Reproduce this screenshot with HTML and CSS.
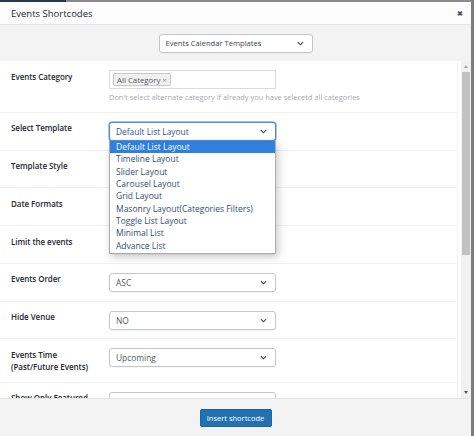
FILE: index.html
```html
<!DOCTYPE html>
<html>
<head>
<meta charset="utf-8">
<link rel="stylesheet" href="styles.css">
</head>
<body>
<div class="screen">
  <div class="modal">
    <div class="topbar"><span class="topbar-accent"></span></div>
    <div class="modal-header">
      <span class="modal-title">Events Shortcodes</span>
      <span class="close">&#x2716;</span>
    </div>
    <div class="toolbar">
      <div class="select select-wide">
        <span class="select-text">Events Calendar Templates</span>
        <svg class="chev" viewBox="0 0 8 5" width="7" height="5"><polyline points="1,1 4,4 7,1" fill="none" stroke="#3c434a" stroke-width="1.2"/></svg>
      </div>
    </div>
    <div class="content">
      <div class="form">
        <div class="row row-category">
          <div class="label">Events Category</div>
          <div class="field">
            <div class="tagbox"><span class="tag">All Category <span class="tag-x">&#xd7;</span></span></div>
            <div class="help">Don't select alternate category if already you have selecetd all categories</div>
          </div>
        </div>
        <div class="row">
          <div class="label">Select Template</div>
          <div class="field field-dd">
            <div class="select select-focus">
              <span class="select-text">Default List Layout</span>
              <svg class="chev" viewBox="0 0 8 5" width="7" height="5"><polyline points="1,1 4,4 7,1" fill="none" stroke="#3c434a" stroke-width="1.2"/></svg>
            </div>
            <ul class="dropdown">
              <li class="opt opt-active">Default List Layout</li>
              <li class="opt">Timeline Layout</li>
              <li class="opt">Slider Layout</li>
              <li class="opt">Carousel Layout</li>
              <li class="opt">Grid Layout</li>
              <li class="opt">Masonry Layout(Categories Filters)</li>
              <li class="opt">Toggle List Layout</li>
              <li class="opt">Minimal List</li>
              <li class="opt">Advance List</li>
            </ul>
          </div>
        </div>
        <div class="row">
          <div class="label">Template Style</div>
          <div class="field"><div class="select"></div></div>
        </div>
        <div class="row">
          <div class="label">Date Formats</div>
          <div class="field"><div class="select"></div></div>
        </div>
        <div class="row">
          <div class="label">Limit the events</div>
          <div class="field"><div class="select"></div></div>
        </div>
        <div class="row">
          <div class="label">Events Order</div>
          <div class="field">
            <div class="select">
              <span class="select-text">ASC</span>
              <svg class="chev" viewBox="0 0 8 5" width="7" height="5"><polyline points="1,1 4,4 7,1" fill="none" stroke="#3c434a" stroke-width="1.2"/></svg>
            </div>
          </div>
        </div>
        <div class="row">
          <div class="label">Hide Venue</div>
          <div class="field">
            <div class="select">
              <span class="select-text">NO</span>
              <svg class="chev" viewBox="0 0 8 5" width="7" height="5"><polyline points="1,1 4,4 7,1" fill="none" stroke="#3c434a" stroke-width="1.2"/></svg>
            </div>
          </div>
        </div>
        <div class="row">
          <div class="label">Events Time<br>(Past/Future Events)</div>
          <div class="field">
            <div class="select">
              <span class="select-text">Upcoming</span>
              <svg class="chev" viewBox="0 0 8 5" width="7" height="5"><polyline points="1,1 4,4 7,1" fill="none" stroke="#3c434a" stroke-width="1.2"/></svg>
            </div>
          </div>
        </div>
        <div class="row">
          <div class="label">Show Only Featured</div>
          <div class="field">
            <div class="select">
              <span class="select-text">NO</span>
              <svg class="chev" viewBox="0 0 8 5" width="7" height="5"><polyline points="1,1 4,4 7,1" fill="none" stroke="#3c434a" stroke-width="1.2"/></svg>
            </div>
          </div>
        </div>
      </div>
      <div class="scrollbar">
        <span class="sb-arrow sb-up"></span>
        <div class="sb-track"><div class="sb-thumb"></div></div>
        <span class="sb-arrow sb-down"></span>
      </div>
    </div>
    <div class="footer">
      <button class="btn">Insert shortcode</button>
    </div>
  </div>
  <div class="edge"></div>
</div>
</body>
</html>
```
FILE: styles.css
```css
* { box-sizing: border-box; }
html, body { margin: 0; padding: 0; }
body {
  font-family: "Open Sans", "Noto Sans", "Liberation Sans", sans-serif;
  background: #fff;
  color: #23282d;
}
.screen {
  display: flex;
  width: 474px;
  height: 436px;
  overflow: hidden;
}
.modal {
  width: 471px;
  height: 436px;
  display: flex;
  flex-direction: column;
  background: #fff;
}
.edge {
  flex: 1;
  background: #7d7d7d;
}
.topbar {
  height: 2px;
  background: #8a8a8a;
  display: flex;
}
.topbar-accent {
  width: 66px;
  background: #23374d;
}
.modal-header {
  height: 23px;
  background: #fcfcfc;
  border-bottom: 1px solid #e2e4e7;
  display: flex;
  align-items: center;
  justify-content: space-between;
  padding: 0 8px 0 11px;
}
.modal-title {
  font-size: 9.5px;
  color: #23282d;
}
.close {
  font-size: 7px;
  color: #50575e;
  font-weight: bold;
}
.toolbar {
  height: 36px;
  background: #f3f3f3;
  display: flex;
  align-items: center;
  justify-content: center;
}
.select {
  height: 19px;
  border: 1px solid #c3c6ca;
  border-radius: 3px;
  background: #fff;
  display: flex;
  align-items: center;
  justify-content: space-between;
  padding: 0 8px 0 6px;
  box-shadow: 0 1px 1px rgba(0,0,0,0.04);
}
.select-wide {
  width: 154px;
  padding-left: 6px;
}
.select-text {
  font-size: 7.6px;
  color: #50575e;
}
.select-wide .select-text { color: #3c434a; }
.select-focus {
  border-color: #4f8fd0;
  box-shadow: 0 0 0 0.5px #4f8fd0;
}
.select-focus .select-text {
  color: #2e5581;
  font-size: 8.4px;
}
.select:not(.select-wide) .select-text { font-size: 8.4px; }
.chev { display: block; }
.content {
  height: 337px;
  display: flex;
  overflow: hidden;
}
.form {
  flex: 1;
  overflow: hidden;
  border-right: 1px solid #f2f2f2;
  margin-right: 3px;
}
.row {
  display: flex;
  padding: 9px 0 8.75px 11px;
  border-bottom: 1px solid #f0f0f1;
}
.label {
  width: 98px;
  flex: none;
  font-size: 8px;
  font-weight: 600;
  line-height: 12px;
  padding-top: 0.5px;
  letter-spacing: -0.05px;
  color: #23282d;
}
.field {
  width: 167px;
  flex: none;
}
.field-dd { position: relative; }
.tagbox {
  height: 19px;
  border: 1px solid #dcdcde;
  background: #fff;
  display: flex;
  align-items: center;
  padding-left: 3px;
}
.tag {
  height: 13px;
  display: inline-flex;
  align-items: center;
  padding: 0 3px;
  background: #f0f0f1;
  border: 1px solid #c8c8c8;
  border-radius: 2px;
  font-size: 7.8px;
  color: #50575e;
}
.tag-x {
  margin-left: 2px;
  color: #8c8f94;
  font-size: 8px;
}
.help {
  margin-top: 3px;
  line-height: 11px;
  font-size: 7.45px;
  color: #a7aaad;
  white-space: nowrap;
}
.dropdown {
  position: absolute;
  left: 0;
  top: 19px;
  width: 167px;
  margin: 0;
  padding: 0 0 1px;
  list-style: none;
  background: #fff;
  border: 1px solid #a8abb0;
  border-top: none;
  box-shadow: 2px 3px 8px rgba(0,0,0,0.22);
  z-index: 5;
}
.opt {
  height: 12.4px;
  line-height: 12.4px;
  padding-left: 6px;
  font-size: 8.5px;
  color: #34506f;
  white-space: nowrap;
}
.opt-active {
  background: #2e7fe0;
  color: #fff;
}
.scrollbar {
  width: 10px;
  flex: none;
  background: #f1f1f1;
  display: flex;
  flex-direction: column;
  align-items: center;
}
.sb-arrow {
  width: 0;
  height: 0;
  border-left: 2.5px solid transparent;
  border-right: 2.5px solid transparent;
  margin: 4px 0;
}
.sb-up { border-bottom: 3px solid #a3a3a3; }
.sb-down { border-top: 3px solid #505050; }
.sb-track {
  flex: 1;
  width: 100%;
  display: flex;
  justify-content: center;
}
.sb-thumb {
  width: 8px;
  height: 183px;
  background: #c1c1c1;
}
.footer {
  flex: 1;
  background: #f3f3f3;
  border-top: 1px solid #e5e5e5;
  display: flex;
  align-items: center;
  justify-content: center;
}
.btn {
  height: 18px;
  width: 72px;
  padding: 0;
  border: 1px solid #1d63a8;
  border-radius: 2px;
  background: #2271b1;
  color: #fff;
  font-family: inherit;
  font-size: 7.5px;
}
```
